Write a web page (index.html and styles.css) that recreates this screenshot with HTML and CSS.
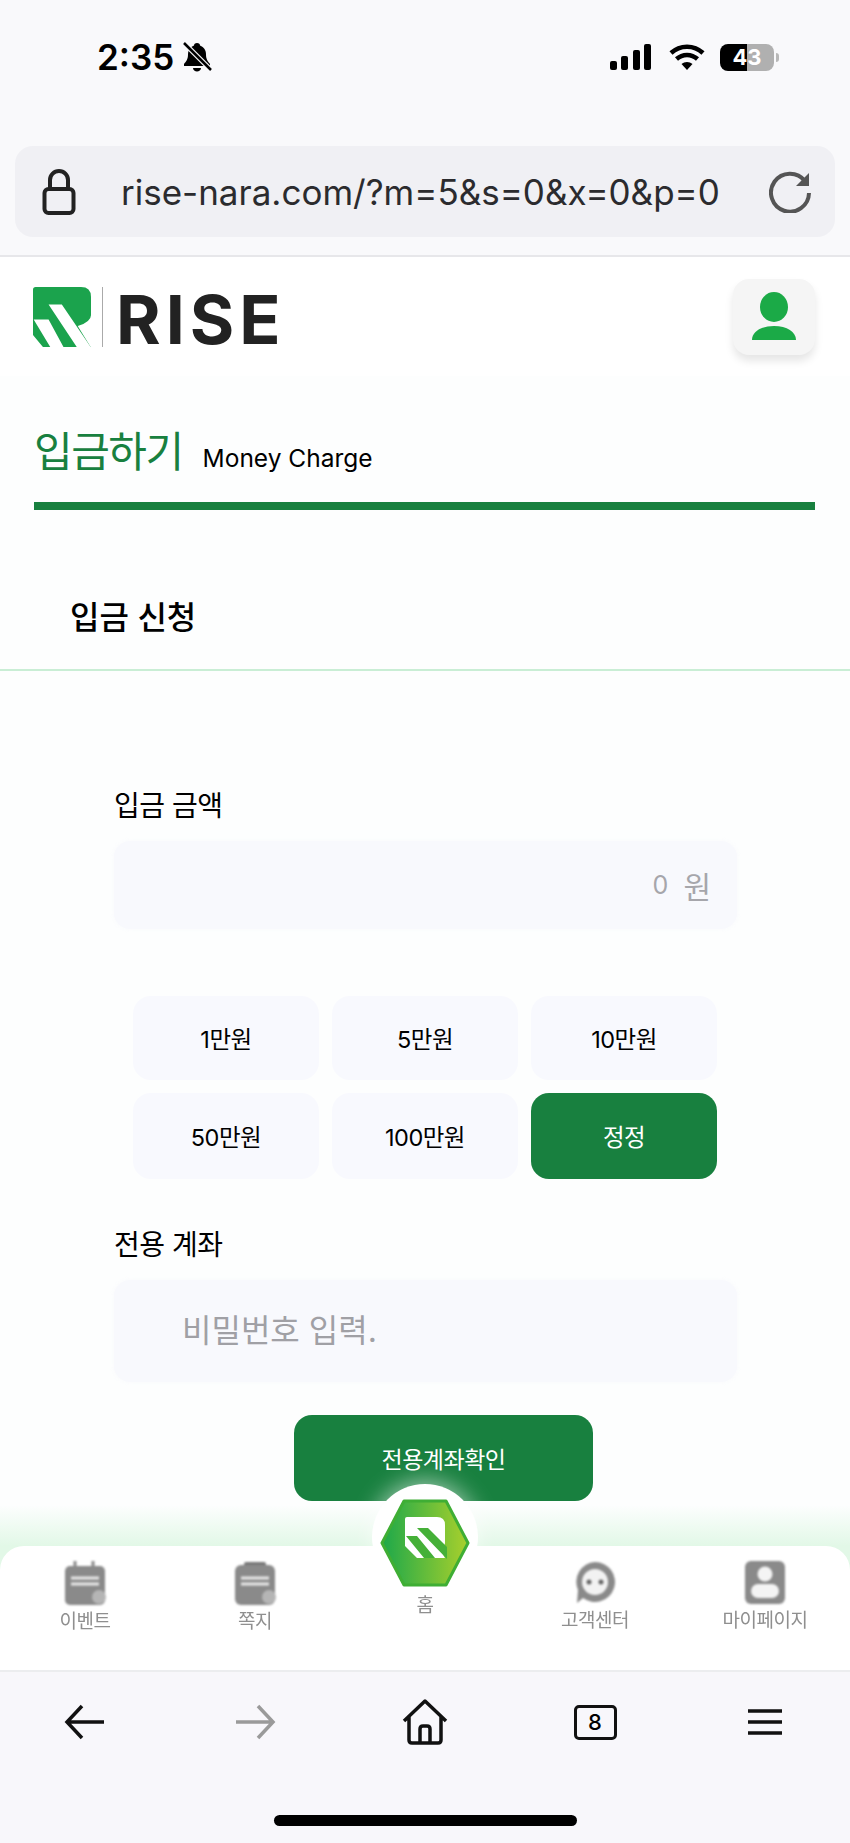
FILE: index.html
```html
<!DOCTYPE html>
<html lang="ko">
<head>
    <meta charset="UTF-8">
    <meta name="viewport" content="width=device-width, initial-scale=1.0">
    <title>입금하기</title>
    <link rel="stylesheet" href="styles.css">
</head>
<body>
    <div class="browser-top">
        <div class="status-bar">
            <div class="status-left">
                <span class="clock">2:35</span>
                <svg class="bell" viewBox="0 0 32 30">
                    <path d="M16 1c2 0 3 1 3 2.500 4 1.500 6 5 6 9 0 5 2 7 4 9.500v2H3v-2c2-2.500 4-4.500 4-9.500 0-4 2-7.500 6-9C13 2 14 1 16 1zM12 26h8c0 2-2 3.500-4 3.500S12 28 12 26z" fill="#000"/>
                    <path d="M3 1l27 27" stroke="#f9f9fb" stroke-width="5"/>
                    <path d="M3 1l27 27" stroke="#000" stroke-width="2.500"/>
                </svg>
            </div>
            <div class="status-right">
                <svg class="signal" viewBox="0 0 42 26">
                    <rect x="0" y="17" width="7" height="9" rx="2"/>
                    <rect x="11" y="12" width="7" height="14" rx="2"/>
                    <rect x="23" y="6" width="7" height="20" rx="2"/>
                    <rect x="34" y="0" width="7" height="26" rx="2"/>
                </svg>
                <svg class="wifi" viewBox="0 0 36 26">
                    <path d="M2 9c9-8.500 23-8.500 32 0M7.500 15c6-5.500 15-5.500 21 0" fill="none" stroke="#000" stroke-width="4.500"/>
                    <path d="M12.500 20c3-2.800 8-2.800 11 0L18 26z" fill="#000"/>
                </svg>
                <div class="battery"><span>43</span></div>
                <i class="battery-tip"></i>
            </div>
        </div>
        <div class="address-bar">
            <svg class="lock" viewBox="0 0 34 46">
                <rect x="2.500" y="20" width="29" height="24" rx="4" fill="none" stroke="#222" stroke-width="4"/>
                <path d="M8 20V11a9 9 0 0 1 18 0v9" fill="none" stroke="#222" stroke-width="4"/>
            </svg>
            <span class="url">rise-nara.com/?m=5&amp;s=0&amp;x=0&amp;p=0</span>
            <svg class="reload" viewBox="0 0 44 42">
                <path d="M36 10A19 19 0 1 0 40 22" fill="none" stroke="#555" stroke-width="4"/>
                <path d="M40 2v13H27z" fill="#555"/>
            </svg>
        </div>
    </div>

    <header class="site-header">
        <div class="logo">
            <svg class="logo-mark" viewBox="0 0 175 181">
                <path d="M8 0H145Q175 0 175 30V85Q175 105 135 118L174 181H30L0 145V8Q0 0 8 0z" fill="#1ba34d"/>
                <path d="M47 53H87L174 181H132zM2 98H47L92 181H52z" fill="#fff"/>
            </svg>
            <i class="logo-divider"></i>
            <span class="logo-text">RISE</span>
        </div>
        <button class="user-btn">
            <svg viewBox="0 0 46 50">
                <ellipse cx="23" cy="15" rx="14" ry="15" fill="#1baa47"/>
                <path d="M1 48c0-8 9-14 22-14s22 6 22 14z" fill="#1baa47"/>
            </svg>
        </button>
    </header>

    <div class="page-title">
        <h1>입금하기</h1>
        <span>Money Charge</span>
    </div>

    <h2 class="section-head">입금 신청</h2>

    <main class="form">
        <div class="field-label first">입금 금액</div>
        <div class="field-box amount-box"><span class="zero">0</span><span class="won">원</span></div>

        <div class="amount-grid">
            <button class="amount-btn">1만원</button>
            <button class="amount-btn">5만원</button>
            <button class="amount-btn">10만원</button>
            <button class="amount-btn">50만원</button>
            <button class="amount-btn">100만원</button>
            <button class="amount-btn reset">정정</button>
        </div>

        <div class="field-label second">전용 계좌</div>
        <div class="field-box password-box">비밀번호 입력.</div>

        <button class="confirm-btn">전용계좌확인</button>
    </main>

    <nav class="tabbar">
        <div class="tabbar-panel">
            <div class="home-badge">
                <svg viewBox="0 0 90 88">
                    <defs>
                        <linearGradient id="hexFill" x1="0" y1="0" x2="1" y2="0">
                            <stop offset="0" stop-color="#1da84a"/>
                            <stop offset="1" stop-color="#a9d02c"/>
                        </linearGradient>
                    </defs>
                    <path d="M24 2H66L88 44 66 86H24L2 44z" fill="url(#hexFill)" stroke="#3fae34" stroke-width="3" stroke-linejoin="round"/>
                    <path d="M27 18H57Q65 18 65 26V44Q65 47 60 50L65 59H37L25 47V20Q25 18 27 18z" fill="#fff"/>
                    <path d="M37 29H48L67 48V60zM26 37H37L55 59H44z" fill="#45b038"/>
                </svg>
            </div>
            <a class="tab">
                <svg class="tab-icon" viewBox="0 0 42 44">
                    <path d="M11 0v8M29 0v8" stroke="#8a8a8a" stroke-width="3"/>
                    <rect x="1" y="5" width="40" height="39" rx="5" fill="#8a8a8a"/>
                    <path d="M7 17h28M7 23h28" stroke="#e8e8e8" stroke-width="3"/>
                    <circle cx="35" cy="36" r="7" fill="#b5b5b5"/>
                </svg>
                <span>이벤트</span>
            </a>
            <a class="tab">
                <svg class="tab-icon" viewBox="0 0 42 44">
                    <rect x="10" y="1" width="22" height="6" rx="2" fill="#777"/>
                    <rect x="1" y="4" width="40" height="40" rx="6" fill="#8a8a8a"/>
                    <path d="M7 17h28M7 23h28" stroke="#e8e8e8" stroke-width="3"/>
                    <circle cx="35" cy="36" r="7" fill="#b5b5b5"/>
                </svg>
                <span>쪽지</span>
            </a>
            <a class="tab tab-home"><span>홈</span></a>
            <a class="tab tab-raised">
                <svg class="tab-icon" viewBox="0 0 42 44">
                    <path d="M21 1a20 20 0 1 1-12 36L3 42l1-13A20 20 0 0 1 21 1z" fill="#8a8a8a"/>
                    <circle cx="21" cy="21" r="13" fill="#f2f2f2"/>
                    <circle cx="15" cy="21" r="2.500" fill="#666"/>
                    <circle cx="27" cy="21" r="2.500" fill="#666"/>
                </svg>
                <span>고객센터</span>
            </a>
            <a class="tab tab-raised">
                <svg class="tab-icon" viewBox="0 0 42 44">
                    <rect x="1" y="0" width="40" height="43" rx="6" fill="#8a8a8a"/>
                    <circle cx="21" cy="13" r="7.500" fill="#f4f4f4"/>
                    <rect x="7" y="23" width="28" height="14" rx="7" fill="#f4f4f4"/>
                </svg>
                <span>마이페이지</span>
            </a>
        </div>
    </nav>

    <div class="browser-bottom">
        <div class="toolbar">
            <svg viewBox="0 0 42 36"><path d="M40 18H3M18 2L3 18l15 16" fill="none" stroke="#111" stroke-width="3.500"/></svg>
            <svg viewBox="0 0 42 36"><path d="M2 18h37M24 2l15 16-15 16" fill="none" stroke="#9a9a9a" stroke-width="3.500"/></svg>
            <svg class="home-icon" viewBox="0 0 46 46">
                <path d="M2 22L23 2l21 20M7 17v24q0 3 3 3h26q3 0 3-3V17" fill="none" stroke="#111" stroke-width="3.500" stroke-linejoin="round"/>
                <path d="M18 44V30q0-3 3-3h4q3 0 3 3v14" fill="none" stroke="#111" stroke-width="3.500"/>
            </svg>
            <div class="tab-count">8</div>
            <svg class="menu-icon" viewBox="0 0 36 28"><path d="M1 3h34M1 14h34M1 25h34" stroke="#111" stroke-width="3.600"/></svg>
        </div>
        <div class="home-indicator"></div>
    </div>
</body>
</html>
```

FILE: styles.css
```css
* {
    box-sizing: border-box;
}
body {
    margin: 0;
    width: 850px;
    height: 1843px;
    overflow: hidden;
    background: #fdfefe;
    color: #000;
    font-family: Inter, "Noto Sans CJK KR", sans-serif;
}
button {
    border: none;
    font-family: inherit;
    padding: 0;
}

/* browser chrome, top */
.browser-top {
    height: 257px;
    background: #f9f9fb;
    border-bottom: 2px solid #e7e7ea;
    padding: 0 15px;
}
.status-bar {
    height: 146px;
    padding: 0 56px 32px 82px;
    display: flex;
    justify-content: space-between;
    align-items: center;
}
.status-left, .status-right {
    display: flex;
    align-items: center;
}
.clock {
    font-size: 35px;
    font-weight: 600;
}
.bell {
    width: 32px;
    height: 30px;
    margin-left: 7px;
}
.signal {
    width: 42px;
    height: 26px;
}
.wifi {
    width: 36px;
    height: 26px;
    margin-left: 17px;
}
.battery {
    width: 54px;
    height: 27px;
    margin-left: 15px;
    border-radius: 8px;
    background: linear-gradient(to right, #000 50%, #b0b0b0 50%);
    color: #fff;
    font-size: 22px;
    font-weight: 700;
    line-height: 27px;
    text-align: center;
}
.battery-tip {
    width: 3px;
    height: 9px;
    margin-left: 2px;
    border-radius: 0 3px 3px 0;
    background: #b8b8b8;
}
.address-bar {
    height: 91px;
    border-radius: 18px;
    background: #f0f0f4;
    padding: 0 22px 0 27px;
    display: flex;
    align-items: center;
}
.lock {
    width: 34px;
    height: 46px;
}
.url {
    margin-left: 45px;
    flex: 1;
    font-size: 35px;
    color: #2b2b2e;
    white-space: nowrap;
}
.reload {
    width: 44px;
    height: 42px;
}

/* site header */
.site-header {
    height: 119px;
    padding: 0 35px 0 33px;
    display: flex;
    justify-content: space-between;
    align-items: center;
    background: #fff;
}
.logo {
    display: flex;
    align-items: center;
    height: 60px;
}
.logo-mark {
    width: 58px;
    height: 60px;
}
.logo-divider {
    width: 1px;
    height: 60px;
    margin: 0 13px 0 11px;
    background: #aaa;
}
.logo-text {
    font-size: 68px;
    font-weight: 700;
    line-height: 60px;
    letter-spacing: 5px;
    color: #222;
    padding-top: 4px;
}
.user-btn {
    width: 82px;
    height: 76px;
    border-radius: 16px;
    background: #f5f5f5;
    box-shadow: 0 6px 8px rgba(0, 0, 0, 0.1);
    display: flex;
    align-items: center;
    justify-content: center;
}
.user-btn svg {
    width: 46px;
    height: 50px;
}

/* page title */
.page-title {
    height: 134px;
    margin: 0 35px 0 34px;
    padding-top: 51px;
    border-bottom: 8px solid #18803f;
    display: flex;
    align-items: baseline;
}
.page-title h1 {
    margin: 0;
    font-size: 42px;
    font-weight: 400;
    line-height: 50px;
    color: #18803f;
    letter-spacing: -1.500px;
}
.page-title span {
    margin-left: 20px;
    font-size: 24.500px;
}
.section-head {
    margin: 0;
    height: 161px;
    padding: 88px 0 0 70px;
    border-bottom: 2px solid #c9eed5;
    font-size: 32px;
    font-weight: 500;
    line-height: 40px;
}

/* form */
.form {
    padding: 0 113px 0 114px;
}
.field-label {
    font-size: 28px;
    line-height: 30px;
    letter-spacing: -0.500px;
}
.field-label.first {
    margin-top: 120px;
}
.field-label.second {
    margin-top: 51px;
}
.field-box {
    margin-top: 20px;
    border-radius: 16px;
    background: #f8f9fd;
    box-shadow: 0 0 4px rgba(248, 249, 253, 0.9);
}
.amount-box {
    height: 88px;
    padding-right: 26px;
    display: flex;
    justify-content: flex-end;
    align-items: center;
    color: #a6a6ab;
}
.zero {
    font-size: 25px;
}
.won {
    margin-left: 15px;
    font-size: 30px;
}
.amount-grid {
    margin: 67px 20px 0 19px;
    display: grid;
    grid-template-columns: repeat(3, 1fr);
    grid-template-rows: 84px 86px;
    gap: 13px;
}
.amount-btn {
    border-radius: 18px;
    background: #f8f9fe;
    color: #000;
    font-size: 23.500px;
    letter-spacing: -0.500px;
    padding-bottom: 1px;
}
.amount-btn.reset {
    background: #18803f;
    color: #fff;
}
.password-box {
    height: 102px;
    padding: 0 0 0 68px;
    line-height: 102px;
    font-size: 32px;
    color: #a0a0a5;
}
.confirm-btn {
    display: block;
    width: 299px;
    height: 86px;
    margin: 33px 0 0 180px;
    border-radius: 18px;
    background: #18803f;
    color: #fff;
    font-size: 23px;
    letter-spacing: -0.500px;
}

/* bottom tab bar */
.tabbar {
    margin-top: 4px;
    padding-top: 41px;
    background: linear-gradient(#fdfefe, #e2f8e7 41px, #e2f8e7);
}
.tabbar-panel {
    position: relative;
    height: 126px;
    padding-top: 15px;
    background: #fff;
    border-radius: 24px 24px 0 0;
    border-bottom: 2px solid #ecedef;
    display: grid;
    grid-template-columns: repeat(5, 170px);
}
.home-badge {
    position: absolute;
    left: 372px;
    top: -62px;
    width: 106px;
    height: 106px;
    border-radius: 50%;
    background: #fff;
    box-shadow: 0 -4px 22px rgba(255, 255, 255, 0.55);
    padding: 15px 8px 0;
}
.home-badge svg {
    display: block;
    width: 90px;
    height: 88px;
    filter: blur(0.4px);
}
.tab {
    display: flex;
    flex-direction: column;
    align-items: center;
    font-size: 19px;
    line-height: 20px;
    color: #8f8f8f;
    letter-spacing: -0.500px;
}
.tab span {
    filter: blur(0.3px);
}
.tab-icon {
    width: 42px;
    height: 44px;
    margin-bottom: 7px;
    filter: blur(1.1px);
}
.tab-home {
    padding-top: 35px;
}
.tab-raised .tab-icon {
    margin-bottom: 6px;
}

/* browser chrome, bottom */
.browser-bottom {
    height: 172px;
    background: #f8f7fb;
    position: relative;
}
.toolbar {
    padding-top: 27px;
    display: grid;
    grid-template-columns: repeat(5, 170px);
    justify-items: center;
    align-items: center;
}
.toolbar svg {
    width: 42px;
    height: 36px;
}
.toolbar .home-icon {
    width: 46px;
    height: 46px;
}
.toolbar .menu-icon {
    width: 36px;
    height: 28px;
}
.tab-count {
    width: 43px;
    height: 35px;
    border: 3px solid #111;
    border-radius: 5px;
    font-size: 22px;
    font-weight: 500;
    line-height: 29px;
    text-align: center;
}
.home-indicator {
    position: absolute;
    left: 274px;
    top: 143px;
    width: 303px;
    height: 11px;
    border-radius: 6px;
    background: #000;
}
```
